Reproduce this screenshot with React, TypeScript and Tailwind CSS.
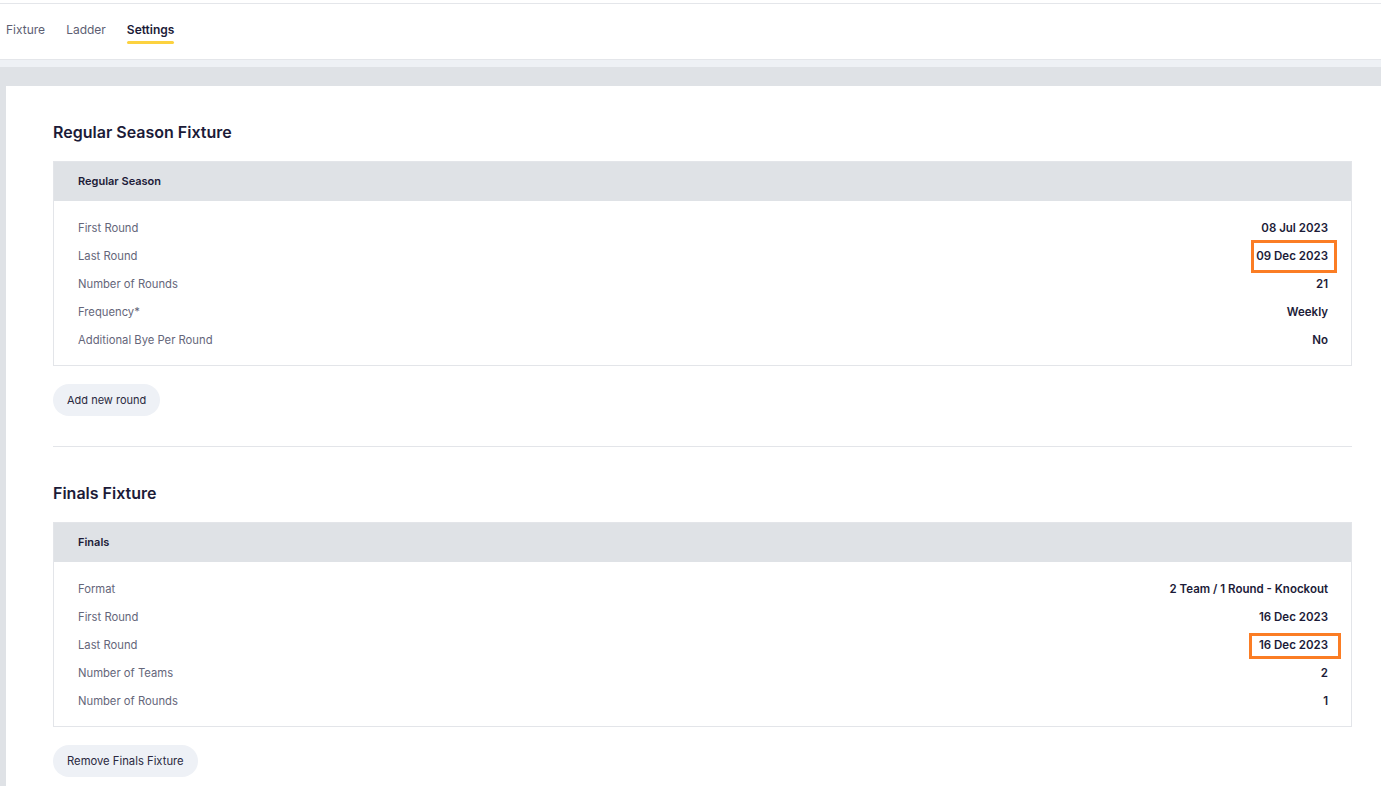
import React from "react";

type Row = { label: string; value: string; mark?: "a" | "b" };

const regular: Row[] = [
  { label: "First Round", value: "08 Jul 2023" },
  { label: "Last Round", value: "09 Dec 2023", mark: "a" },
  { label: "Number of Rounds", value: "21" },
  { label: "Frequency*", value: "Weekly" },
  { label: "Additional Bye Per Round", value: "No" },
];

const finals: Row[] = [
  { label: "Format", value: "2 Team / 1 Round - Knockout" },
  { label: "First Round", value: "16 Dec 2023" },
  { label: "Last Round", value: "16 Dec 2023", mark: "b" },
  { label: "Number of Teams", value: "2" },
  { label: "Number of Rounds", value: "1" },
];

function FixtureTable({ title, rows }: { title: string; rows: Row[] }) {
  return (
    <div className="border border-[#e3e5e9]">
      <div className="h-[39px] bg-[#dfe2e6] flex items-center px-[24px] text-[11px] font-semibold text-[#1c1b38]">
        {title}
      </div>
      <div className="pt-[13px] pb-[11px] pl-[24px] pr-[23px]">
        {rows.map((r) => (
          <div key={r.label} className="h-[28px] flex items-center justify-between">
            <span className="text-[11.25px] text-[#65667a]">{r.label}</span>
            <span className="relative pt-[1px] text-[11.5px] font-semibold text-[#1c1b38]">
              {r.value}
              {/* annotation boxes */}
              {r.mark === "a" && (
                <span className="absolute left-[-5px] right-[-9px] top-[-7px] bottom-[-8px] border-[3px] border-[#fb7d24]" />
              )}
              {r.mark === "b" && (
                <span className="absolute left-[-10px] right-[-13px] top-[-3px] bottom-[-5px] border-[3px] border-[#fb7d24]" />
              )}
            </span>
          </div>
        ))}
      </div>
    </div>
  );
}

export default function App() {
  return (
    <div className="w-[1381px] h-[786px] overflow-hidden bg-[#dfe2e6] font-['Inter',sans-serif]">
      {/* Tabs */}
      <div className="bg-white pt-[3px]">
        <div className="border-t border-b border-[#e4e6ea] h-[57px] flex items-start pt-[17px] pl-[6px] gap-[21px] text-[12px]">
          <span className="text-[#5d5e72]">Fixture</span>
          <span className="text-[#5d5e72]">Ladder</span>
          <span className="flex flex-col items-center gap-[2px] font-semibold text-[#1c1b38]">
            Settings
            <span className="w-full h-[3px] rounded-full bg-[#fcd23f]" />
          </span>
        </div>
      </div>
      <div className="h-[7px] bg-[#eef1f5]" />
      <div className="pt-[19px] pl-[6px]">
        <div className="bg-white h-[800px] pl-[47px] pr-[29px] pt-[35px]">
          <h2 className="text-[16px] font-semibold text-[#1c1b38] leading-[22px] mb-[18px]">Regular Season Fixture</h2>
          <FixtureTable title="Regular Season" rows={regular} />
          <button className="mt-[18px] h-[32px] px-[14px] rounded-full bg-[#eef1f6] text-[11px] text-[#2a2940]">
            Add new round
          </button>
          <div className="mt-[30px] border-t border-[#e3e5e9]" />
          <h2 className="mt-[35px] text-[16px] font-semibold text-[#1c1b38] leading-[22px] mb-[18px]">Finals Fixture</h2>
          <FixtureTable title="Finals" rows={finals} />
          <button className="mt-[18px] h-[32px] px-[14px] rounded-full bg-[#eef1f6] text-[11.25px] text-[#2a2940]">
            Remove Finals Fixture
          </button>
        </div>
      </div>
    </div>
  );
}
